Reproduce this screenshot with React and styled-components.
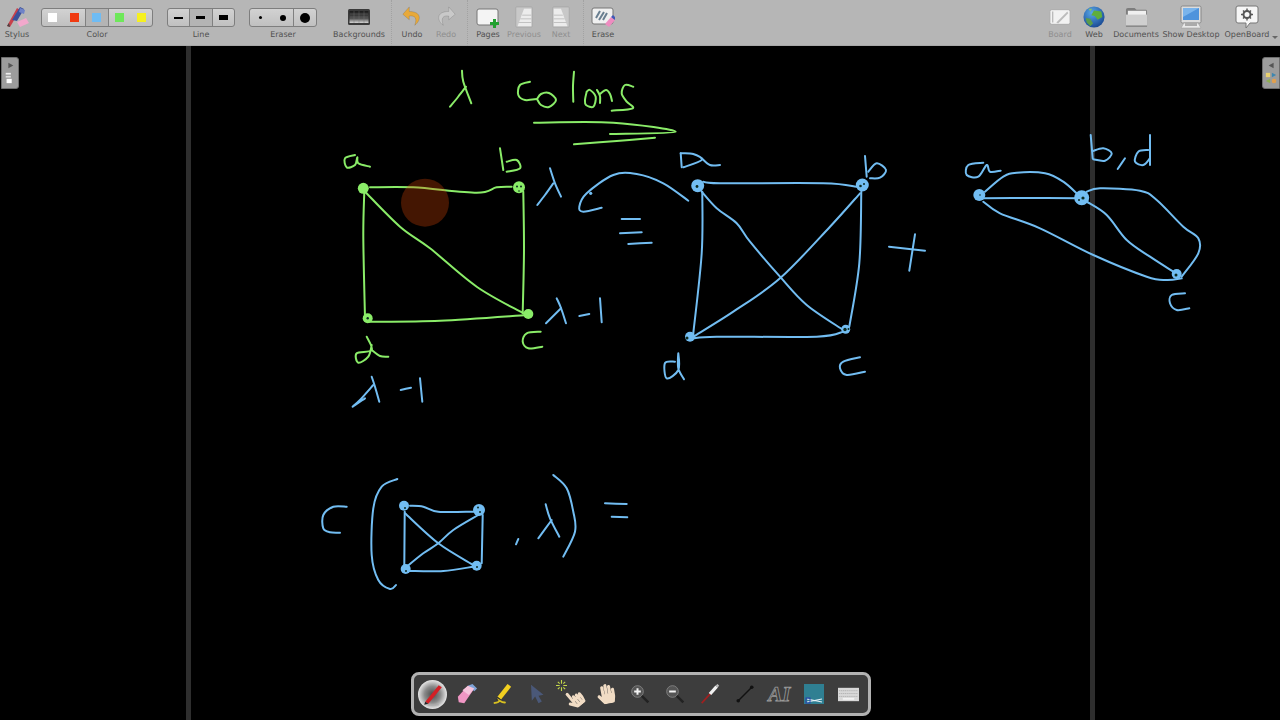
import React from 'react';
import styled, { createGlobalStyle } from 'styled-components';
import { FaHandPaper, FaHandPointer } from 'react-icons/fa';

const GlobalStyle = createGlobalStyle`
  html, body {
    margin: 0;
    padding: 0;
    height: 100%;
    background: #000;
    overflow: hidden;
  }
  #root {
    height: 100%;
  }
`;

const GREEN = '#8aec68';
const BLUE = '#72bdf2';

// strokes are written in page coordinates, same as the screenshot
const strokes = [
  // title
  [GREEN, [[462, 70.7], [463.3, 81.7], [471.3, 103.3]]],
  [GREEN, [[466, 86.7], [458, 97], [450, 106.7]]],
  [GREEN, [[530, 81.7], [520, 85], [518.3, 95], [525, 100], [537, 99]]],
  [GREEN, [[537, 99], [541, 94], [549, 93], [556, 100], [549, 107], [541, 105], [537, 99]]],
  [GREEN, [[574, 71.7], [573, 86], [573.3, 101.7]]],
  [GREEN, [[586.7, 91.7], [585, 100], [586, 105], [593.3, 106.7], [595.7, 96.7], [590, 90], [586.7, 91.7]]],
  [GREEN, [[597, 90], [600, 96], [600, 103]]],
  [GREEN, [[600, 94], [606, 90], [610, 94], [612, 101]]],
  [GREEN, [[633.3, 86.7], [625, 85], [621.7, 93.3], [626.7, 101.7], [632.7, 108.3], [611.7, 110.7]]],
  [GREEN, [[534, 122.7], [613.3, 122.7], [675.7, 131.7], [610, 134]]],
  [GREEN, [[574, 144.3], [616.7, 141], [655, 137.7]]],
  // green graph
  [GREEN, [[355, 155], [345, 158.3], [346.7, 167.3], [355, 165], [357.3, 157.3], [358.3, 163.3], [370, 166.7]]],
  [GREEN, [[500, 148.3], [503.3, 170]]],
  [GREEN, [[506.7, 161.7], [516.7, 160], [520, 168.3], [506.7, 171.7]]],
  [GREEN, [[370, 187.3], [413.3, 187.3], [476.7, 192.7], [496.7, 187.3], [511.7, 186.7]]],
  [GREEN, [[523.3, 191.7], [524, 250], [522.7, 313.3]]],
  [GREEN, [[364.3, 191.7], [363.3, 236.7], [365, 318.3]]],
  [GREEN, [[368.3, 321.7], [440, 320.7], [526.7, 315]]],
  [GREEN, [[365, 191.7], [400, 226.7], [430, 248.3], [476.7, 286.7], [523.3, 313.3]]],
  [GREEN, [[540.7, 331.7], [526.7, 333.3], [522.7, 341.7], [528.3, 348.3], [542.3, 346.7]]],
  [GREEN, [[366.7, 336.7], [371.7, 350], [356.7, 353.3], [358.3, 362.7], [368.3, 356.7], [371.7, 345]]],
  [GREEN, [[371.7, 350], [380, 356], [388.3, 356.7]]],
  // blue notes around the green graph
  [BLUE, [[550, 168.3], [555, 183.3], [561, 196.7]]],
  [BLUE, [[553.3, 183.3], [545, 195], [537.3, 205]]],
  [BLUE, [[601.7, 207.7], [583.3, 211.7], [579.3, 206.7], [586.7, 193.3], [613.3, 175], [636.7, 174], [663.3, 183.3], [688.3, 200.7]]],
  [BLUE, [[621.7, 219], [640, 219]]],
  [BLUE, [[620, 233.3], [641.7, 232.3]]],
  [BLUE, [[628.3, 244], [651.7, 242.7]]],
  [BLUE, [[556.7, 298.3], [561, 308], [566, 323.3]]],
  [BLUE, [[561, 308.3], [546, 323.3]]],
  [BLUE, [[579.3, 316], [589.3, 314]]],
  [BLUE, [[600, 298.3], [601.7, 322.3]]],
  [BLUE, [[371.7, 376.7], [375, 386.7], [379.3, 401.7]]],
  [BLUE, [[373.3, 385], [360, 400], [352.7, 406.7], [365, 398.3]]],
  [BLUE, [[400.7, 390], [411, 387.7]]],
  [BLUE, [[420, 378.3], [422.3, 401.7]]],
  // K4
  [BLUE, [[680.7, 153.3], [681.7, 167.3]]],
  [BLUE, [[680.7, 153.3], [693.3, 154], [701.7, 160], [683.3, 167.3]]],
  [BLUE, [[701.7, 158.3], [710, 165], [720, 165]]],
  [BLUE, [[865, 156], [866.7, 176.7]]],
  [BLUE, [[868.3, 171.7], [876.7, 163.3], [886, 170], [880, 177.7], [870, 178.3]]],
  [BLUE, [[703.3, 181.7], [720, 183.3], [823.3, 183.3], [856.7, 186.7]]],
  [BLUE, [[702.3, 191.7], [701.7, 253.3], [693.3, 333.3]]],
  [BLUE, [[861.3, 191.7], [859.3, 263.3], [849.3, 326.7]]],
  [BLUE, [[693.3, 338.3], [716.7, 336.7], [816.7, 336.7], [843.3, 331.7]]],
  [BLUE, [[701.7, 191.7], [716.7, 208.3], [736.7, 223.3], [750, 241.7], [780, 276.7], [806.7, 305], [843.3, 330]]],
  [BLUE, [[860, 193.3], [830, 226.7], [780, 278.3], [733.3, 311.7], [693.3, 336.7]]],
  [BLUE, [[889, 246.7], [925, 250.7]]],
  [BLUE, [[915, 234.3], [909.3, 270.7]]],
  [BLUE, [[675, 361.7], [665, 363], [666.7, 378.3], [678.3, 370], [678.3, 353.3], [678.3, 368.3], [684, 379.3]]],
  [BLUE, [[860, 357.3], [843.3, 361.7], [840, 368.3], [846.7, 375], [865, 371.7]]],
  // triangle graph on the right
  [BLUE, [[983.3, 162.7], [968.3, 165], [966.7, 175], [978.3, 176.7], [986.7, 165], [990, 171.7], [1000.7, 170.7]]],
  [BLUE, [[1090.7, 135], [1092.7, 158.3]]],
  [BLUE, [[1093, 151], [1103.3, 148.3], [1111.7, 153.3], [1105, 160.7], [1093.3, 159.3]]],
  [BLUE, [[1125, 158.3], [1117.7, 169]]],
  [BLUE, [[1150, 135], [1150, 165]]],
  [BLUE, [[1148.3, 150], [1138.3, 151.7], [1135, 161.7], [1143.3, 165], [1150, 158.3]]],
  [BLUE, [[983.3, 198.3], [1030, 198], [1076.7, 198.3]]],
  [BLUE, [[985, 191.7], [1003.3, 176.7], [1016.7, 172.7], [1045, 173.3], [1063.3, 181.7], [1078.3, 195]]],
  [BLUE, [[983.3, 201.7], [1000, 213.3], [1040, 228.3], [1093.3, 255], [1146.7, 276.7], [1166.7, 280], [1181.7, 278.3]]],
  [BLUE, [[1086.7, 201.7], [1106.7, 215], [1126.7, 240], [1150, 256.7], [1173.3, 271.7]]],
  [BLUE, [[1086.7, 191.7], [1100, 188.3], [1140, 190.7], [1156.7, 200], [1183.3, 226.7], [1198.3, 238.3], [1198.3, 253.3], [1181.7, 276.7]]],
  [BLUE, [[1185, 293.3], [1171.7, 295], [1170, 303.3], [1176.7, 310], [1189.3, 308.3]]],
  // bottom formula
  [BLUE, [[346.7, 506.7], [333.3, 506.7], [323.3, 515], [323.3, 528.3], [330, 532.3], [340, 532.7]]],
  [BLUE, [[397.3, 479], [381.7, 486.7], [373.3, 508.3], [371.7, 555], [378.3, 580], [390, 589], [396, 585]]],
  [BLUE, [[410, 505.7], [423.3, 506.7], [438.3, 511.7], [473.3, 511.7]]],
  [BLUE, [[482.7, 515], [481.7, 563.3]]],
  [BLUE, [[404.7, 511.7], [404.3, 565]]],
  [BLUE, [[408.3, 571], [443.3, 571], [473.3, 566.7]]],
  [BLUE, [[405, 513.3], [438.3, 543.3], [473.3, 565]]],
  [BLUE, [[478.3, 515], [453.3, 530], [438.3, 543.3], [423.3, 553.3], [406.7, 566.7]]],
  [BLUE, [[518.3, 539], [516, 544.3]]],
  [BLUE, [[545.7, 504.3], [550, 518.3], [559.3, 536.7]]],
  [BLUE, [[551.7, 520], [538.3, 538.3]]],
  [BLUE, [[553.3, 475], [566.7, 488.3], [573.3, 511.7], [575, 531.7], [563.3, 556.7]]],
  [BLUE, [[605, 503.3], [626.7, 504]]],
  [BLUE, [[611.7, 516.7], [627.3, 517.3]]],
];

const nodes = [
  [GREEN, 363.3, 188.3, 5.5],
  [GREEN, 519, 187.3, 6],
  [GREEN, 528.3, 314, 5],
  [GREEN, 367.7, 318.3, 5],
  [BLUE, 697.7, 185.7, 6.5],
  [BLUE, 862.3, 185, 6.5],
  [BLUE, 845.7, 329.3, 4.5],
  [BLUE, 690, 336.7, 5],
  [BLUE, 979.3, 195, 6],
  [BLUE, 1081.7, 197.7, 7.5],
  [BLUE, 1176.7, 274, 5],
  [BLUE, 404, 505.7, 5],
  [BLUE, 479, 510, 6],
  [BLUE, 405.7, 569, 5],
  [BLUE, 476.7, 565.7, 5],
  [BLUE, 590.7, 193.3, 1.6],
];

// the pen scribbled over the nodes, these are the gaps it left
const holes = [
  [517, 186.5, 1],
  [521, 186.5, 1],
  [519, 191, 0.8],
  [367.7, 318.3, 1.2],
  [697, 186.5, 1.4],
  [860.5, 186, 1.3],
  [864, 184, 1],
  [845, 329.5, 1.7],
  [848.5, 329, 1],
  [687, 338, 1.5],
  [980, 195, 0.8],
  [1083, 198, 1.6],
  [1079, 200, 1],
  [1176, 275, 1.5],
  [405, 508, 1],
  [478, 507.5, 1],
  [480, 512, 1],
  [406, 571, 1],
  [477, 567, 1],
];

// catmull-rom through the traced points, so the ink does not look polygonal
const smooth = (pts) => {
  let d = `M${pts[0][0]} ${pts[0][1]}`;
  for (let i = 0; i < pts.length - 1; i++) {
    const p0 = pts[i - 1] || pts[i];
    const p1 = pts[i];
    const p2 = pts[i + 1];
    const p3 = pts[i + 2] || p2;
    const c1x = p1[0] + (p2[0] - p0[0]) / 6;
    const c1y = p1[1] + (p2[1] - p0[1]) / 6;
    const c2x = p2[0] - (p3[0] - p1[0]) / 6;
    const c2y = p2[1] - (p3[1] - p1[1]) / 6;
    d += ` C${c1x} ${c1y} ${c2x} ${c2y} ${p2[0]} ${p2[1]}`;
  }
  return d;
};

const colorCells = [
  { color: '#ffffff' },
  { color: '#f03a10' },
  { color: '#6fbcf4', sep: true, on: true },
  { color: '#6ee85a', sep: true },
  { color: '#f6f020' },
];

const App = () => (
  <Screen>
    <GlobalStyle />
    <TopBar>
      <Tool $w={34} label='Stylus'>
        <StylusIcon />
      </Tool>
      <Tool $w={112} $ml={7} label='Color'>
        <Segmented>
          {colorCells.map((cell) => (
            <Cell key={cell.color} $sep={cell.sep} $on={cell.on}>
              <Swatch $color={cell.color} />
            </Cell>
          ))}
        </Segmented>
      </Tool>
      <Tool $w={68} $ml={14} label='Line'>
        <Segmented>
          <Cell><LineMark $h={2} /></Cell>
          <Cell $sep $on><LineMark $h={3} /></Cell>
          <Cell $sep><LineMark $h={5} /></Cell>
        </Segmented>
      </Tool>
      <Tool $w={68} $ml={14} label='Eraser'>
        <Segmented>
          <Cell><Dot $d={3} /></Cell>
          <Cell><Dot $d={6} /></Cell>
          <Cell $sep><Dot $d={10} /></Cell>
        </Segmented>
      </Tool>
      <Tool $w={56} $ml={14} label='Backgrounds'>
        <BackgroundsIcon />
      </Tool>
      <Divider $ml={4} />
      <Tool $w={30} $ml={5} label='Undo'>
        <ArrowIcon color='#e8a93a' />
      </Tool>
      <Tool $w={30} $ml={4} label='Redo' off>
        <ArrowIcon color='#c9c9c9' flip />
      </Tool>
      <Divider $ml={6} />
      <Tool $w={30} $ml={5} label='Pages'>
        <PagesIcon />
      </Tool>
      <Tool $w={36} $ml={3} label='Previous' off>
        <PageIcon />
      </Tool>
      <Tool $w={30} $ml={4} label='Next' off>
        <PageIcon flip />
      </Tool>
      <Divider $ml={7} />
      <Tool $w={34} $ml={2} label='Erase'>
        <EraseIcon />
      </Tool>
      <Spacer />
      <Tool $w={30} label='Board' off>
        <BoardIcon />
      </Tool>
      <Tool $w={30} $ml={4} label='Web'>
        <GlobeIcon />
      </Tool>
      <Tool $w={50} $ml={2} label='Documents'>
        <FolderIcon />
      </Tool>
      <Tool $w={56} $ml={2} label='Show Desktop'>
        <MonitorIcon />
      </Tool>
      <Tool $w={50} $ml={3} label='OpenBoard'>
        <BubbleIcon />
      </Tool>
      <MenuArrow />
    </TopBar>

    <Stage>
      <Sheet />
      <Ink viewBox='0 46 1280 674'>
        {strokes.map(([color, pts], i) => (
          <InkLine key={i} d={smooth(pts)} stroke={color} />
        ))}
        {nodes.map(([color, cx, cy, r], i) => (
          <circle key={i} cx={cx} cy={cy} r={r} fill={color} />
        ))}
        {holes.map(([cx, cy, r], i) => (
          <circle key={i} cx={cx} cy={cy} r={r} fill='#0c2a20' />
        ))}
        <circle cx='425' cy='202.7' r='24' fill='rgba(226, 72, 8, 0.3)' />
      </Ink>

      <SideTab $side='left'>
        <TabArrow viewBox='0 0 10 10'>
          <path d='M2 1 L9 5 L2 9 Z' fill='#555' />
        </TabArrow>
        <TabArt viewBox='0 0 12 14'>
          <rect x='1' y='1' width='6' height='2' fill='#eee' />
          <rect x='1' y='4.5' width='6' height='2' fill='#ddd' />
          <rect x='2' y='8' width='6' height='5' fill='#fff' />
        </TabArt>
      </SideTab>
      <SideTab $side='right'>
        <TabArrow viewBox='0 0 10 10'>
          <path d='M8 1 L1 5 L8 9 Z' fill='#555' />
        </TabArrow>
        <TabArt viewBox='0 0 14 14'>
          <rect x='1' y='1' width='5' height='5' fill='#e8d070' />
          <path d='M8 1 L13 3.5 L8 6 Z' fill='#3c86b0' />
          <path d='M6 8 L1 10.5 L6 13 Z' fill='#8fb050' />
          <circle cx='10.5' cy='10.5' r='2.7' fill='#e0a050' />
        </TabArt>
      </SideTab>

      <Dock>
        <DockSlot><ActivePen /></DockSlot>
        <DockSlot><EraserIcon /></DockSlot>
        <DockSlot><MarkerIcon /></DockSlot>
        <DockSlot><CursorIcon /></DockSlot>
        <DockSlot><PointerIcon /></DockSlot>
        <DockSlot><HandIcon /></DockSlot>
        <DockSlot><LensIcon plus /></DockSlot>
        <DockSlot><LensIcon /></DockSlot>
        <DockSlot><LaserIcon /></DockSlot>
        <DockSlot><LineToolIcon /></DockSlot>
        <DockSlot><TextTool>AI</TextTool></DockSlot>
        <DockSlot><CaptureIcon /></DockSlot>
        <DockSlot><KeyboardIcon /></DockSlot>
      </Dock>
    </Stage>
  </Screen>
);

export default App;

const Tool = ({ $w, $ml, label, off, children }) => (
  <ToolBox $w={$w} $ml={$ml}>
    <IconSlot>{children}</IconSlot>
    <ToolLabel $off={off}>{label}</ToolLabel>
  </ToolBox>
);

const StylusIcon = () => (
  <Icon $size={24} viewBox='0 0 24 24'>
    <path d='M2 21 L12 3 L15 5 L5 22 Z' fill='#c8404a' />
    <path d='M2 21 L4 18 L5 22 Z' fill='#444' />
    <path d='M7 15 L15 2 L19 4 L12 16 Z' fill='#3a4f9a' />
    <path d='M15 3 L20 5 L19 9 L14 7 Z' fill='#6f83c8' />
    <path d='M12 17 L21 13 L24 18 L15 22 Z' fill='#f2a8cc' />
  </Icon>
);

const BackgroundsIcon = () => (
  <Icon $size={24} viewBox='0 0 24 24'>
    <defs>
      <linearGradient id='bgfill' x1='0' y1='0' x2='0' y2='1'>
        <stop offset='0' stopColor='#1c1c1c' />
        <stop offset='0.6' stopColor='#4c4c4c' />
        <stop offset='1' stopColor='#d6d6d6' />
      </linearGradient>
    </defs>
    <rect x='1' y='4' width='22' height='16' rx='1.5' fill='#3a3a3a' />
    <rect x='2.5' y='6' width='19' height='12' fill='url(#bgfill)' />
    <path d='M3 9 H21 M3 12 H21 M7 6 V18 M12 6 V18 M17 6 V18' stroke='#777' strokeWidth='0.4' />
  </Icon>
);

const ArrowIcon = ({ color, flip }) => (
  <Icon $size={22} $flip={flip} viewBox='0 0 24 24'>
    <path
      d='M9 1 L2 9 L9 15 L9 11 C15 10 18 13 15 21 C22 16 23 6 9 6 Z'
      fill={color}
      stroke='#00000022'
    />
  </Icon>
);

const PagesIcon = () => (
  <Icon $size={24} viewBox='0 0 24 24'>
    <rect x='1' y='4' width='21' height='16' rx='2' fill='#f4f4f4' stroke='#777' />
    <path d='M17 14 H20 V17 H23 V20 H20 V23 H17 V20 H14 V17 H17 Z' fill='#22a030' />
  </Icon>
);

const PageIcon = ({ flip }) => (
  <Icon $size={22} $flip={flip} viewBox='0 0 22 24'>
    <rect x='2' y='1' width='18' height='22' rx='1' fill='#c8c8c8' stroke='#a8a8a8' />
    <path d='M4 22 L11 3 H19 V22 Z' fill='#ececec' />
    <path d='M9 10 H19 M7 14 H19 M5 18 H19' stroke='#bdbdbd' />
  </Icon>
);

const EraseIcon = () => (
  <Icon $size={24} viewBox='0 0 24 24'>
    <rect x='1' y='3' width='21' height='16' rx='2' fill='#f0f0f0' stroke='#777' />
    <path d='M5 13 L9 6 M8 15 L13 7 M12 15 L16 8' stroke='#6a7f90' strokeWidth='2' />
    <path d='M14 19 L20 12 L24 15 L18 22 Z' fill='#ee8cc0' />
    <path d='M20 12 L22 10 L24 12 L24 15 Z' fill='#4058b8' />
  </Icon>
);

const BoardIcon = () => (
  <Icon $size={22} viewBox='0 0 24 24'>
    <rect x='1' y='4' width='22' height='16' rx='2' fill='#f2f2f2' stroke='#aaa' />
    <path d='M4 6 V18' stroke='#bbb' strokeWidth='1.5' />
    <path d='M8 18 L20 6 L21 8 L10 19 Z' fill='#bcbcbc' />
  </Icon>
);

const GlobeIcon = () => (
  <Icon $size={22} viewBox='0 0 24 24'>
    <defs>
      <radialGradient id='globefill' cx='0.4' cy='0.3' r='0.8'>
        <stop offset='0' stopColor='#5aa8e8' />
        <stop offset='1' stopColor='#123f8a' />
      </radialGradient>
    </defs>
    <circle cx='12' cy='12' r='11.5' fill='url(#globefill)' />
    <path d='M12 5 L20 6 L21 12 L16 15 L13 11 L9 10 Z' fill='#5fae3c' />
    <path d='M3 13 L8 14 L11 19 L8 22 L4 18 Z' fill='#5a9c4a' />
    <path d='M6 3 L10 3 L8 6 Z' fill='#8cc06a' />
  </Icon>
);

const FolderIcon = () => (
  <Icon $size={23} viewBox='0 0 24 24'>
    <path d='M1 5 Q1 3 3 3 H10 L12 5 H22 Q23 5 23 7 V22 H1 Z' fill='#7d7d7d' />
    <rect x='3' y='6' width='19' height='5' fill='#f0f0f0' />
    <path d='M1 10 H23 V22 H1 Z' fill='#cfcfcf' />
    <path d='M1 22 H23' stroke='#666' />
  </Icon>
);

const MonitorIcon = () => (
  <Icon $size={24} viewBox='0 0 24 24'>
    <rect x='2' y='1' width='20' height='17' rx='1.5' fill='#dcdcdc' stroke='#888' />
    <rect x='4' y='3' width='16' height='12' fill='#4e93dc' />
    <path d='M4 3 H20 L4 12 Z' fill='#7ab4ec' />
    <path d='M5 18 L2 23 H22 L19 18 Z' fill='#e8e8e8' stroke='#999' strokeWidth='0.5' />
    <rect x='6' y='18' width='12' height='3' fill='#aaa' />
  </Icon>
);

const BubbleIcon = () => (
  <Icon $size={24} viewBox='0 0 24 24'>
    <path d='M3 1 H21 Q23 1 23 3 V16 Q23 18 21 18 H15 L11 23 V18 H3 Q1 18 1 16 V3 Q1 1 3 1 Z' fill='#f6f6f6' stroke='#777' />
    <circle cx='12' cy='9.5' r='3.5' fill='none' stroke='#555' strokeWidth='2' />
    <path d='M12 3.5 V6 M12 13 V15.5 M6 9.5 H8.5 M15.5 9.5 H18 M8 5.5 L9.5 7 M14.5 12 L16 13.5 M16 5.5 L14.5 7 M9.5 12 L8 13.5' stroke='#555' strokeWidth='1.4' />
  </Icon>
);

const ActivePen = () => (
  <Icon $size={29} viewBox='0 0 28 28'>
    <defs>
      <radialGradient id='penbg' cx='0.5' cy='0.5' r='0.5'>
        <stop offset='0' stopColor='#4a4a4a' />
        <stop offset='0.55' stopColor='#8a8a8a' />
        <stop offset='1' stopColor='#e6e6e6' />
      </radialGradient>
    </defs>
    <circle cx='14' cy='14' r='14' fill='url(#penbg)' />
    <path d='M7 21 L20 5 L23 7 L10 23 Z' fill='#d42026' />
    <path d='M7 21 L6 24 L10 23 Z' fill='#222' />
    <path d='M9 24 H20' stroke='#aaa' />
  </Icon>
);

const EraserIcon = () => (
  <Icon $size={22} viewBox='0 0 24 24'>
    <path d='M2 15 L13 3 L20 6 L9 22 L3 21 Z' fill='#f096c4' />
    <path d='M13 3 L18 1 L23 6 L20 9 Z' fill='#7fa4d8' />
    <path d='M7 8 L13 3 L20 6 L14 13 Z' fill='#f6c4dc' />
  </Icon>
);

const MarkerIcon = () => (
  <Icon $size={22} viewBox='0 0 24 24'>
    <path d='M7 15 L18 1 L22 4 L11 18 Z' fill='#f2d020' />
    <path d='M7 15 L5 19 L11 18 Z' fill='#333' />
    <path d='M3 22 Q10 21 9 19 Q14 22 16 21' stroke='#d8c020' strokeWidth='2' fill='none' />
  </Icon>
);

const CursorIcon = () => (
  <Icon $size={20} viewBox='0 0 24 24'>
    <path d='M6 1 L7 20 L11 15 L15 23 L19 21 L15 14 L21 13 Z' fill='#4a5878' />
  </Icon>
);

const PointerIcon = () => (
  <PointerWrap>
    <Sparkle viewBox='0 0 12 12'>
      <path d='M6 0 V4 M6 8 V12 M0 6 H4 M8 6 H12 M2 2 L4 4 M8 8 L10 10 M10 2 L8 4 M2 10 L4 8' stroke='#c4d84a' strokeWidth='1.2' />
    </Sparkle>
    <PointingHand />
  </PointerWrap>
);

const LensIcon = ({ plus }) => (
  <Icon $size={20} viewBox='0 0 24 24'>
    <path d='M13 13 L22 22' stroke='#222' strokeWidth='3' />
    <circle cx='9' cy='9' r='7' fill='#555' stroke='#888' />
    <path d={plus ? 'M5 9 H13 M9 5 V13' : 'M5 9 H13'} stroke='#f4f4f4' strokeWidth='2.4' />
  </Icon>
);

const LaserIcon = () => (
  <Icon $size={20} viewBox='0 0 24 24'>
    <path d='M2 23 L13 11' stroke='#a02020' strokeWidth='2' />
    <path d='M12 12 L20 3' stroke='#f0f0f0' strokeWidth='4' />
    <path d='M20 3 L22 1' stroke='#bbb' strokeWidth='3' />
  </Icon>
);

const LineToolIcon = () => (
  <Icon $size={18} viewBox='0 0 24 24'>
    <path d='M3 21 L21 3' stroke='#111' strokeWidth='1.8' />
    <circle cx='3' cy='21' r='2.4' fill='#111' />
    <circle cx='21' cy='3' r='2.4' fill='#111' />
  </Icon>
);

const CaptureIcon = () => (
  <Icon $size={20} viewBox='0 0 20 20'>
    <rect width='20' height='20' fill='#2f7f92' />
    <path d='M3 18 L18 15 M3 15 L18 18' stroke='#e6f0f6' strokeWidth='1.2' />
    <rect x='2' y='14' width='4' height='5' fill='none' stroke='#2a40b0' />
  </Icon>
);

const KeyboardIcon = () => (
  <Icon $size={21} viewBox='0 0 22 14'>
    <rect width='22' height='14' fill='#d8d8d8' />
    <path d='M1 3 H21 M1 6 H21 M1 9 H21' stroke='#9a9a9a' strokeWidth='0.6' strokeDasharray='1.4 0.6' />
    <rect x='5' y='10.5' width='12' height='2' fill='#f2f2f2' />
  </Icon>
);

const Screen = styled.div`
  display: flex;
  flex-direction: column;
  width: 1280px;
  height: 720px;
  overflow: hidden;
  background: #000;
  font-family: 'DejaVu Sans', sans-serif;
  text-rendering: geometricPrecision;
`;

const TopBar = styled.header`
  display: flex;
  flex: none;
  height: 46px;
  padding-right: 2px;
  box-sizing: border-box;
  background: #b6b6b6;
  border-bottom: 1px solid #a8a8a8;
`;

const ToolBox = styled.div`
  display: flex;
  flex: none;
  flex-direction: column;
  align-items: center;
  box-sizing: border-box;
  width: ${(props) => props.$w}px;
  margin-left: ${(props) => props.$ml || 0}px;
  padding-top: 4px;
`;

const IconSlot = styled.div`
  display: flex;
  align-items: center;
  justify-content: center;
  width: 100%;
  height: 25px;
`;

const ToolLabel = styled.span`
  height: 12px;
  font-size: 8px;
  line-height: 12px;
  white-space: nowrap;
  color: ${(props) => (props.$off ? '#8e8e8e' : '#505050')};
`;

const Divider = styled.div`
  flex: none;
  width: 1px;
  height: 46px;
  margin-left: ${(props) => props.$ml}px;
  border-left: 1px dotted #a2a2a2;
  box-sizing: border-box;
`;

const Spacer = styled.div`
  flex: 1;
`;

const MenuArrow = styled.div`
  flex: none;
  align-self: flex-end;
  width: 0;
  height: 0;
  margin: 0 0 6px 0;
  border-left: 3.5px solid transparent;
  border-right: 3.5px solid transparent;
  border-top: 3px solid #666;
`;

const Segmented = styled.div`
  display: flex;
  width: 100%;
  height: 19px;
  margin-top: 2px;
  box-sizing: border-box;
  overflow: hidden;
  border: 1px solid #7e7e7e;
  border-radius: 3px;
  background: linear-gradient(#d2d2d2, #c0c0c0);
`;

const Cell = styled.div`
  display: flex;
  flex: 1;
  align-items: center;
  justify-content: center;
  box-sizing: border-box;
  border-left: ${(props) => (props.$sep ? '1px solid #808080' : 'none')};
  background: ${(props) => (props.$on ? '#b4b4b4' : 'transparent')};
`;

const Swatch = styled.span`
  width: 9px;
  height: 9px;
  background: ${(props) => props.$color};
`;

const LineMark = styled.span`
  width: 9px;
  height: ${(props) => props.$h}px;
  background: #000;
`;

const Dot = styled.span`
  width: ${(props) => props.$d}px;
  height: ${(props) => props.$d}px;
  border-radius: 50%;
  background: #000;
`;

const Icon = styled.svg`
  display: block;
  flex: none;
  width: ${(props) => props.$size}px;
  height: ${(props) => props.$size}px;
  transform: ${(props) => (props.$flip ? 'scaleX(-1)' : 'none')};
`;

const Stage = styled.main`
  position: relative;
  display: flex;
  flex: 1;
  justify-content: center;
  min-height: 0;
  background: #000;
`;

const Sheet = styled.div`
  width: 909px;
  box-sizing: border-box;
  border-left: 5px solid #2e2e2e;
  border-right: 5px solid #2e2e2e;
`;

const Ink = styled.svg`
  position: absolute;
  top: 0;
  left: 0;
  width: 1280px;
  height: 674px;
  filter: blur(0.35px);
`;

const InkLine = styled.path`
  fill: none;
  stroke-width: 2;
  stroke-linecap: round;
  stroke-linejoin: round;
`;

const SideTab = styled.div`
  position: absolute;
  top: 11px;
  ${(props) => (props.$side === 'left' ? 'left: 1px;' : 'right: 0;')}
  display: flex;
  flex-direction: column;
  align-items: center;
  gap: 3px;
  width: 18px;
  height: 32px;
  padding-top: 4px;
  box-sizing: border-box;
  background: #9c9c9c;
  border: 1px solid #6e6e6e;
  border-radius: ${(props) => (props.$side === 'left' ? '0 3px 3px 0' : '3px 0 0 3px')};
`;

const TabArrow = styled.svg`
  width: 7px;
  height: 7px;
`;

const TabArt = styled.svg`
  width: 12px;
  height: 12px;
`;

const Dock = styled.nav`
  position: absolute;
  left: 411px;
  bottom: 4px;
  display: flex;
  align-items: center;
  width: 460px;
  height: 44px;
  padding: 0 1px;
  box-sizing: border-box;
  background: #3d3d3d;
  border: 3px solid #b2b2b2;
  border-radius: 8px;
`;

const DockSlot = styled.div`
  display: flex;
  flex: none;
  align-items: center;
  justify-content: center;
  width: 34.7px;
`;

const PointerWrap = styled.div`
  position: relative;
  width: 24px;
  height: 24px;
`;

const Sparkle = styled.svg`
  position: absolute;
  top: -2px;
  left: -3px;
  width: 11px;
  height: 11px;
`;

const PointingHand = styled(FaHandPointer)`
  position: absolute;
  right: -1px;
  bottom: -2px;
  width: 19px;
  height: 19px;
  color: #f1dcc4;
  transform: rotate(-40deg);
`;

const HandIcon = styled(FaHandPaper)`
  width: 20px;
  height: 20px;
  color: #f1dcc4;
  transform: rotate(-10deg);
`;

const TextTool = styled.span`
  font-family: 'Liberation Serif', serif;
  font-size: 21px;
  font-style: italic;
  font-weight: 700;
  line-height: 1;
  color: #3d3d3d;
  -webkit-text-stroke: 0.8px #9a9a9a;
`;
